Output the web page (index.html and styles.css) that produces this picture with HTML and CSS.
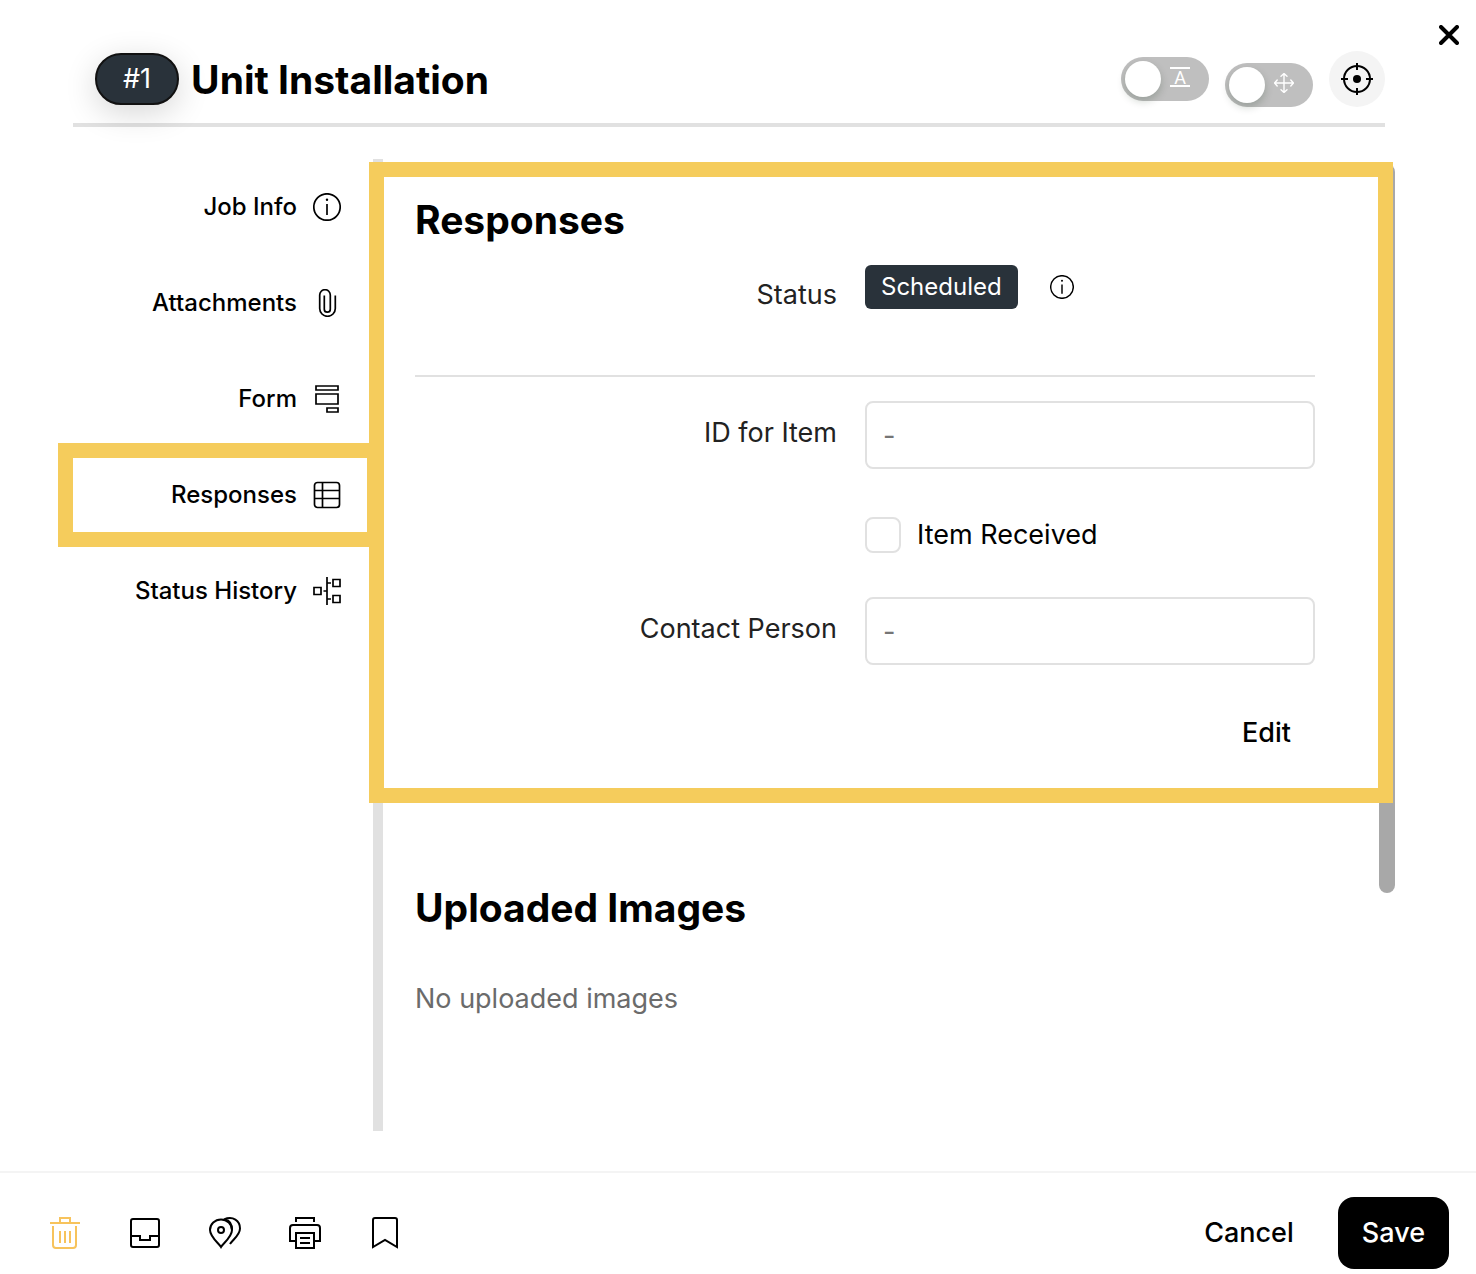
FILE: index.html
```html
<!DOCTYPE html>
<html lang="en">
<head>
<meta charset="utf-8">
<meta name="viewport" content="width=device-width, initial-scale=1">
<title>Unit Installation</title>
<link rel="stylesheet" href="styles.css">
</head>
<body>
<div class="dialog">
  <button class="close" type="button" aria-label="Close">
    <svg width="20" height="20" viewBox="0 0 20 20" fill="none" stroke="currentColor" stroke-width="4" stroke-linecap="round"><path d="M2 2l16 16M18 2L2 18"/></svg>
  </button>

  <header class="header">
    <span class="number">#1</span>
    <h1 class="title">Unit Installation</h1>
    <div class="actions">
      <label class="toggle">
        <input type="checkbox" aria-label="Show labels">
        <svg class="toggle-icon" width="20" height="20" viewBox="0 0 20 20" fill="none" stroke="#fff" stroke-width="2"><path d="M0 1h20M0 19h20"/><text class="glyph" x="10" y="17" text-anchor="middle">A</text></svg>
      </label>
      <label class="toggle toggle-low">
        <input type="checkbox" aria-label="Allow moving">
        <svg class="toggle-icon" width="20" height="20" viewBox="0 0 20 20" fill="none" stroke="#fff" stroke-width="1.4" stroke-linecap="round" stroke-linejoin="round"><path d="M10 .5v19M.5 10h19M7 3.2L10 .5l3 2.7M7 16.8l3 2.7 3-2.7M3.2 7L.5 10l2.7 3M16.8 7l2.7 3-2.7 3"/></svg>
      </label>
      <button class="locate" type="button" aria-label="Locate">
        <svg width="32" height="32" viewBox="0 0 32 32" fill="none" stroke="currentColor" stroke-width="2"><circle cx="16" cy="16" r="13"/><circle cx="16" cy="16" r="4" fill="currentColor" stroke="none"/><path d="M16 0v7M16 25v7M0 16h7M25 16h7"/></svg>
      </button>
    </div>
  </header>

  <div class="body">
    <nav class="nav">
      <a class="nav-item" href="#info">Job Info
        <svg class="icon" viewBox="0 0 28 28"><circle cx="14" cy="14" r="13.2"/><path d="M14 11v11"/><circle class="dot" cx="14" cy="6.8" r="1.2"/></svg>
      </a>
      <a class="nav-item" href="#attachments">Attachments
        <svg class="icon" viewBox="0 0 28 28"><path d="M22.3 6.5V19.5a7.8 7.8 0 0 1-15.6 0V6a5.3 5.3 0 0 1 10.6 0V20.2a3 3 0 0 1-6 0V6.5"/></svg>
      </a>
      <a class="nav-item" href="#form">Form
        <svg class="icon" viewBox="0 0 28 28"><path d="M3 1h22v4H3zM3 9h22v10H3zM14 23h11v4H14z"/></svg>
      </a>
      <a class="nav-item nav-item-current" href="#responses" aria-current="true">Responses
        <svg class="icon" viewBox="0 0 28 28"><rect x="1.5" y="1.5" width="25" height="25" rx="3"/><path d="M9.5 1.5v25M2 9.5h24M2 17.5h24"/></svg>
      </a>
      <a class="nav-item" href="#history">Status History
        <svg class="icon" viewBox="0 0 28 28"><path d="M1 10.5h7v7H1zM20 2.5h7v7h-7zM20 18.5h7v7h-7zM14 0v28M10.5 14H14M14 6h4M14 22h4"/></svg>
      </a>
    </nav>

    <main class="content">
      <div class="scroll-thumb"></div>
      <section class="section section-current" id="responses">
        <h2 class="section-title">Responses</h2>
        <div class="row status-row">
          <span class="label">Status</span>
          <div class="status">
            <span class="badge">Scheduled</span>
            <button class="info" type="button" aria-label="About this status">
              <svg width="24" height="24" viewBox="0 0 28 28"><circle cx="14" cy="14" r="13.2"/><path d="M14 11v11"/><circle class="dot" cx="14" cy="6.8" r="1.2"/></svg>
            </button>
          </div>
        </div>
        <div class="row">
          <label class="label" for="item-id">ID for Item</label>
          <input class="field" id="item-id" type="text" placeholder="-">
        </div>
        <div class="row">
          <label class="check">
            <input type="checkbox">
            Item Received
          </label>
        </div>
        <div class="row">
          <label class="label" for="contact">Contact Person</label>
          <input class="field" id="contact" type="text" placeholder="-">
        </div>
        <button class="text-button edit" type="button">Edit</button>
      </section>

      <section class="section">
        <h2 class="section-title">Uploaded Images</h2>
        <p class="empty">No uploaded images</p>
      </section>
    </main>
  </div>

  <footer class="footer">
    <div class="tools">
      <button class="tool tool-delete" type="button" aria-label="Delete"><svg viewBox="0 0 32 32"><path d="M1 6h30M11 6V1h10v5M4 9v19a3 3 0 0 0 3 3h17a3 3 0 0 0 3-3V9M11 14v12M16 14v12M21 14v12"/></svg></button>
      <button class="tool" type="button" aria-label="Archive"><svg viewBox="0 0 32 32"><rect x="2" y="2" width="28" height="28" rx="2"/><path d="M2 19h9v4h10v-4h9"/></svg></button>
      <button class="tool" type="button" aria-label="Locations"><svg viewBox="0 0 32 32"><path d="M12 30C10 26.5 1 20 1 13a11 10.5 0 0 1 22 0C23 20 14 26.5 12 30z"/><circle cx="12" cy="13" r="3"/><path d="M15 2.5C24 -1.5 31 4 31 11.5C31 18 24 22.5 21 27M16 2.5C21 3.5 23 8 23 13"/></svg></button>
      <button class="tool" type="button" aria-label="Print"><svg viewBox="0 0 32 32"><path d="M7 5V1h18v4M7 24H1V11a3 3 0 0 1 3-3h24a3 3 0 0 1 3 3v13h-6M7 16h18v15H7zM11 21h10M11 26h10"/></svg></button>
      <button class="tool" type="button" aria-label="Bookmark"><svg viewBox="0 0 32 32"><path d="M4 30V3a2 2 0 0 1 2-2h20a2 2 0 0 1 2 2v27l-12-7z"/></svg></button>
    </div>
    <div class="decisions">
      <button class="text-button" type="button">Cancel</button>
      <button class="text-button save" type="button">Save</button>
    </div>
  </footer>
</div>
</body>
</html>
```

FILE: styles.css
```css
:root {
  --ink: #000;
  --slate: #29323a;
  --line: #e1e1e1;
  --accent: #f5cc5c;
}

* {
  box-sizing: border-box;
}

body {
  margin: 0;
  background: #fff;
  color: var(--ink);
  font-family: Inter, "Liberation Sans", sans-serif;
  font-size: 27px;
  line-height: 36px;
}

button,
input {
  margin: 0;
  font: inherit;
  color: inherit;
}

button {
  padding: 0;
  border: 0;
  background: none;
  cursor: pointer;
}

svg {
  display: block;
}

.dialog {
  position: relative;
  display: flex;
  flex-direction: column;
  min-height: 100vh;
}

.close {
  position: absolute;
  top: 25px;
  right: 17px;
}

/* Header */
.header {
  display: flex;
  align-items: center;
  gap: 12px;
  margin: 51px 91px 0 73px;
  padding: 0 0 16px 22px;
  border-bottom: 4px solid var(--line);
}

.number {
  padding: 6px 26px;
  border: 2px solid #111;
  border-radius: 26px;
  background: var(--slate);
  color: #fff;
  box-shadow: 0 8px 32px rgba(0, 0, 0, 0.16);
}

.title,
.section-title {
  margin: 0;
  font-size: 39px;
  line-height: 48px;
  font-weight: 700;
}

.title {
  padding-top: 2px;
}

.actions {
  display: flex;
  align-items: center;
  gap: 16px;
  margin-left: auto;
}

.toggle {
  position: relative;
  width: 88px;
  height: 44px;
}

.toggle-low {
  align-self: flex-end;
}

.toggle input {
  appearance: none;
  display: block;
  width: 100%;
  height: 100%;
  padding: 4px;
  border-radius: 22px;
  background: #bfbfbf;
}

.toggle input::before {
  content: "";
  display: block;
  width: 36px;
  height: 36px;
  border-radius: 50%;
  background: #fff;
  box-shadow: 0 4px 8px rgba(0, 35, 11, 0.2);
}

.toggle-icon {
  position: absolute;
  top: 10px;
  left: 49px;
}

.glyph {
  fill: #fff;
  stroke: none;
  font: 400 18px Roboto, sans-serif;
}

.locate {
  display: grid;
  place-items: center;
  width: 56px;
  height: 56px;
  border-radius: 50%;
  background: #f4f4f4;
}

/* Side navigation and content */
.body {
  display: flex;
  flex: 1;
  margin: 32px 81px 40px 73px;
}

.nav {
  flex: 0 0 300px;
}

.nav-item {
  position: relative;
  display: flex;
  align-items: center;
  justify-content: flex-end;
  gap: 16px;
  height: 96px;
  padding-right: 32px;
  color: inherit;
  font-size: 24px;
  font-weight: 500;
  text-decoration: none;
}

.nav-item-current::after,
.section-current::after {
  content: "";
  position: absolute;
  border: 15px solid var(--accent);
  pointer-events: none;
}

.nav-item-current::after {
  inset: -4px -9px -4px -15px;
}

.icon,
.info svg {
  fill: none;
  stroke: currentColor;
  stroke-width: 1.7;
}

.icon {
  width: 28px;
  height: 28px;
}

.icon .dot,
.info .dot {
  fill: currentColor;
  stroke: none;
}

.content {
  position: relative;
  flex: 1;
  padding: 0 80px 0 32px;
  border-left: 10px solid var(--line);
}

.scroll-thumb {
  position: absolute;
  top: 5px;
  right: 0;
  width: 16px;
  height: 75%;
  border-radius: 8px;
  background: #a8a8a8;
}

.section {
  position: relative;
  padding-top: 37px;
}

.section-current {
  margin-bottom: 44px;
  padding-bottom: 40px;
  display: flex;
  flex-direction: column;
}

.section-current::after {
  inset: 3px -78px 0 -46px;
}

.row {
  display: grid;
  grid-template-columns: 1fr 1fr;
  margin-bottom: 48px;
}

.status-row {
  margin: 21px 0 24px;
  padding-bottom: 62px;
  border-bottom: 2px solid var(--line);
}

.label {
  padding: 14px 28px 0 0;
  color: #222;
  text-align: right;
}

.status-row .label {
  padding-top: 12px;
}

.status {
  display: flex;
  align-items: flex-start;
  gap: 32px;
}

.badge {
  padding: 4px 16px;
  border-radius: 6px;
  background: var(--slate);
  color: #fff;
  font-size: 24px;
}

.info {
  padding: 10px 0;
}

.field {
  width: 100%;
  height: 68px;
  padding: 0 16px;
  border: 2px solid var(--line);
  border-radius: 8px;
  background: #fff;
}

.field::placeholder {
  color: #757575;
}

.check {
  grid-column: 2;
  display: flex;
  align-items: center;
  gap: 16px;
  margin-bottom: -4px;
}

.check input {
  appearance: none;
  width: 36px;
  height: 36px;
  border: 2px solid var(--line);
  border-radius: 8px;
}

.text-button {
  padding: 18px 24px;
  font-weight: 500;
}

.edit {
  align-self: flex-end;
  margin-top: -16px;
  padding-bottom: 12px;
}

.empty {
  margin: 49px 0 0;
  color: #6b6b6b;
}

/* Footer */
.footer {
  display: flex;
  align-items: center;
  justify-content: space-between;
  padding: 24px 27px 5px 49px;
  border-top: 2px solid #f4f4f4;
}

.tools {
  display: flex;
  gap: 48px;
}

.tool svg {
  width: 32px;
  height: 32px;
  fill: none;
  stroke: currentColor;
  stroke-width: 2;
}

.tool-delete {
  color: #f7c35c;
}

.decisions {
  display: flex;
  gap: 20px;
}

.save {
  border-radius: 16px;
  background: var(--ink);
  color: #fff;
}
```
